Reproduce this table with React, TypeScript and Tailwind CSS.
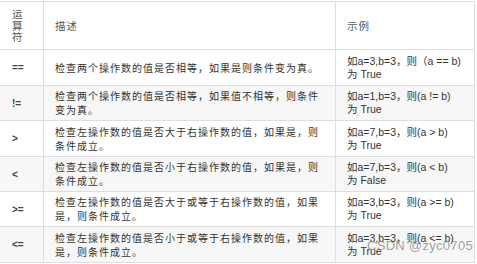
import React from "react";

const rows: { op: string; desc: string; ex1: string; ex2: string; h: string; bg: string }[] = [
  { op: "==", desc: "检查两个操作数的值是否相等，如果是则条件变为真。", ex1: "如a=3,b=3，则（a == b)", ex2: "为 True", h: "h-[36px]", bg: "bg-white" },
  { op: "!=", desc: "检查两个操作数的值是否相等，如果值不相等，则条件变为真。", ex1: "如a=1,b=3，则(a != b)", ex2: "为 True", h: "h-[35px]", bg: "bg-[#f7f7f7]" },
  { op: ">", desc: "检查左操作数的值是否大于右操作数的值，如果是，则条件成立。", ex1: "如a=7,b=3，则(a > b)", ex2: "为 True", h: "h-[36px]", bg: "bg-white" },
  { op: "<", desc: "检查左操作数的值是否小于右操作数的值，如果是，则条件成立。", ex1: "如a=7,b=3，则(a < b)", ex2: "为 False", h: "h-[35px]", bg: "bg-[#f7f7f7]" },
  { op: ">=", desc: "检查左操作数的值是否大于或等于右操作数的值，如果是，则条件成立。", ex1: "如a=3,b=3，则(a >= b)", ex2: "为 True", h: "h-[35px]", bg: "bg-white" },
  { op: "<=", desc: "检查左操作数的值是否小于或等于右操作数的值，如果是，则条件成立。", ex1: "如a=3,b=3，则(a <= b)", ex2: "为 True", h: "h-[36px]", bg: "bg-[#f7f7f7]" },
];

const cjk = "font-['Noto_Sans_CJK_SC',sans-serif]";
const lat = "font-['Liberation_Sans','Noto_Sans_CJK_SC',sans-serif]";

export default function App() {
  return (
    <div className="relative w-[477px] h-[264px] bg-white overflow-hidden">
      <table className="border-collapse table-fixed mt-[1px] ml-[-1px] text-[#333]">
        <colgroup>
          <col className="w-[44px]" />
          <col className="w-[292px]" />
          <col className="w-[139px]" />
        </colgroup>
        <tbody>
          <tr className="h-[48px] bg-white">
            <td className={`border border-[#dedede] pl-[12px] align-middle ${cjk} text-[10.5px] leading-[11.5px] text-[#555]`}>
              运<br />算<br />符
            </td>
            <td className={`border border-[#dedede] pl-[11px] align-middle ${cjk} text-[10.5px] text-[#555] tracking-[1px]`}>描述</td>
            <td className={`border border-[#dedede] pl-[11px] align-middle ${cjk} text-[10.5px] text-[#555] tracking-[1px]`}>示例</td>
          </tr>
          {rows.map((r) => (
            <tr key={r.op} className={`${r.h} ${r.bg}`}>
              <td className={`border border-[#dedede] pl-[12px] align-middle ${lat} text-[10px] font-bold text-[#444]`}>{r.op}</td>
              <td className={`border border-[#dedede] pl-[11px] pr-[12px] align-middle ${cjk} text-[10px] leading-[14px] tracking-[1px] text-[#333]`}>
                {r.desc}
              </td>
              <td className={`border border-[#dedede] pl-[11px] align-middle ${lat} text-[10.5px] leading-[13px] text-[#333]`}>
                <div className="whitespace-nowrap">{r.ex1}</div>
                <div>{r.ex2}</div>
              </td>
            </tr>
          ))}
        </tbody>
      </table>
      <div className="absolute left-[367px] top-[236px] font-['Liberation_Sans',sans-serif] text-[13px] text-[#888]/80 tracking-[0.3px]">
        CSDN @zyc0705
      </div>
    </div>
  );
}
